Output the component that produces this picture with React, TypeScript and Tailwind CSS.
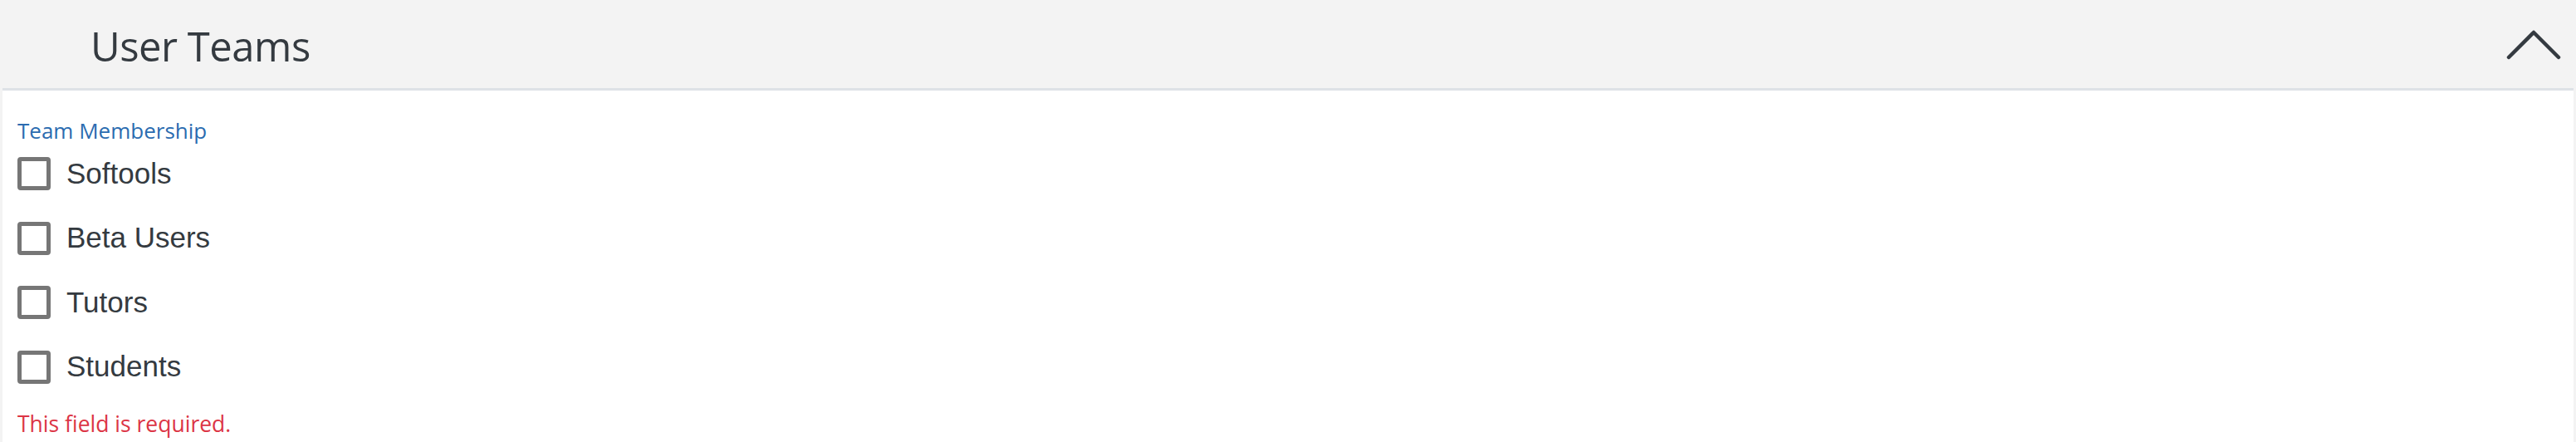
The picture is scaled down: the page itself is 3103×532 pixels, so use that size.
export default function App() {
  const teams = ["Softools", "Beta Users", "Tutors", "Students"];

  return (
    <div className="w-full h-[532px] bg-[#f3f3f3] flex flex-col overflow-hidden">
      {/* Header */}
      <div className="h-[106px] shrink-0 flex items-center justify-between pl-[109px] pr-[18px]">
        <h2 className="text-[49px] leading-none text-[#343a40] font-['Open_Sans',sans-serif] tracking-[-0.5px] pt-[5px]">
          User Teams
        </h2>
        <svg width="66" height="38" viewBox="0 0 66 38" fill="none" className="mt-[2px]">
          <path d="M3 34 L33 4 L63 34" stroke="#343a40" strokeWidth="4.5" strokeLinecap="round" strokeLinejoin="round" />
        </svg>
      </div>

      {/* Body */}
      <div className="flex-1 mx-[3px] border-t-[3px] border-[#dee2e6] bg-white px-[18px] pt-[33px]">
        <p className="text-[26px] leading-[30px] text-[#2b6cb0] font-['Open_Sans',sans-serif]">Team Membership</p>
        <div className="mt-[17px] flex flex-col gap-[37.5px]">
          {teams.map((t) => (
            <label key={t} className="h-[40px] flex items-center">
              <span className="w-[40px] h-[40px] shrink-0 rounded-[4px] border-[5px] border-[#767676] bg-white" />
              <span className="ml-[19px] text-[35px] text-[#343a40] font-['Liberation_Sans',Arial,sans-serif]">{t}</span>
            </label>
          ))}
        </div>
        <p className="mt-[33px] text-[26.5px] leading-[30px] text-[#dc3545] font-['Open_Sans',sans-serif]">This field is required.</p>
      </div>
    </div>
  );
}
